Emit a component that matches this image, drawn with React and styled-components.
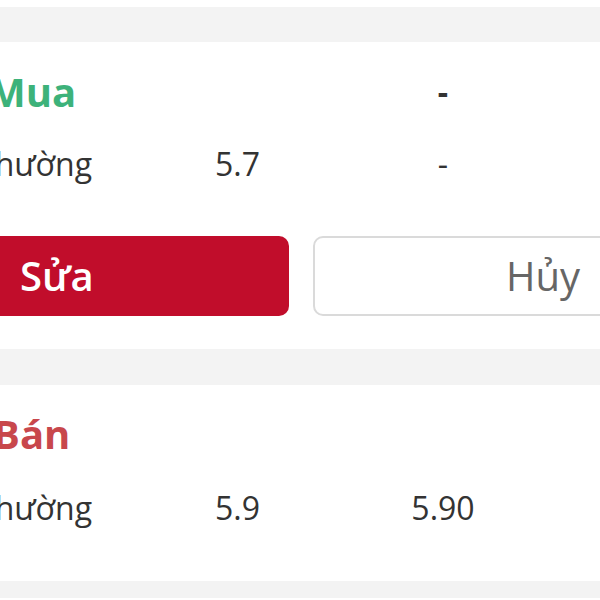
import React from 'react'
import styled, { createGlobalStyle } from 'styled-components'

const GlobalStyle = createGlobalStyle`
  html, body {
    margin: 0;
    padding: 0;
    background: #ffffff;
    overflow: hidden;
  }
  body {
    font-family: "Open Sans", "Noto Sans", sans-serif;
    color: #333333;
  }
`

const orders = [
  {
    id: 'buy',
    title: 'Mua',
    tone: 'buy',
    head: '-',
    label: 'Thường',
    price: '5.7',
    value: '-',
    actions: true,
  },
  {
    id: 'sell',
    title: 'Bán',
    tone: 'sell',
    head: '',
    label: 'Thường',
    price: '5.9',
    value: '5.90',
    actions: false,
  },
]

export default function App() {
  return (
    <Screen>
      <GlobalStyle />
      <TopGap />
      <Band $h={35} />
      {orders.map((o, i) => (
        <React.Fragment key={o.id}>
          <Card $top={o.actions ? 28 : 27} $bottom={o.actions ? 33 : 51}>
            <Row $size={40} $weight={700}>
              <Title $tone={o.tone}>{o.title}</Title>
              <Cell />
              <Cell $center $size={32}>{o.head}</Cell>
            </Row>
            <Row $size={32} $weight={400} $gap={o.actions ? 28 : 30}>
              <Cell>{o.label}</Cell>
              <Cell>{o.price}</Cell>
              <Cell $center>{o.value}</Cell>
            </Row>
            {o.actions && (
              <Actions>
                <EditButton>Sửa</EditButton>
                <CancelButton>Hủy</CancelButton>
              </Actions>
            )}
          </Card>
          <Band $h={i === 0 ? 36 : 17} />
        </React.Fragment>
      ))}
    </Screen>
  )
}

const Screen = styled.div`
  width: 600px;
  height: 600px;
  overflow: hidden;
  display: flex;
  flex-direction: column;
`

const TopGap = styled.div`
  height: 7px;
  flex: none;
  background: #ffffff;
`

const Band = styled.div`
  height: ${p => p.$h}px;
  flex: none;
  background: #f3f3f3;
`

const Card = styled.div`
  flex: none;
  background: #ffffff;
  padding: ${p => p.$top}px 0 ${p => p.$bottom}px;
  margin-left: -23px;
  width: 660px;
`

const Row = styled.div`
  display: grid;
  grid-template-columns: 238px 173px 110px;
  font-size: ${p => p.$size}px;
  font-weight: ${p => p.$weight};
  line-height: 44px;
  height: 44px;
  margin-top: ${p => p.$gap || 0}px;
  color: #333333;
  white-space: nowrap;
`

const Cell = styled.div`
  text-align: ${p => (p.$center ? 'center' : 'left')};
  ${p => p.$size && `font-size: ${p.$size}px;`}
`

const Title = styled.div`
  margin-left: ${p => (p.$tone === 'buy' ? 11 : 16)}px;
  color: ${p => (p.$tone === 'buy' ? '#3db27a' : '#c8474c')};
`

const Actions = styled.div`
  display: flex;
  gap: 24px;
  margin-top: 50px;
  margin-left: 3px;
  height: 80px;
`

const BaseButton = styled.div`
  box-sizing: border-box;
  height: 80px;
  border-radius: 10px;
  display: flex;
  align-items: center;
  font-size: 40px;
  line-height: 1;
`

const EditButton = styled(BaseButton)`
  width: 309px;
  padding-left: 40px;
  background: #c10d2b;
  color: #ffffff;
  font-weight: 600;
`

const CancelButton = styled(BaseButton)`
  width: 310px;
  border: 2px solid #dadada;
  background: #ffffff;
  color: #666666;
  font-weight: 500;
  justify-content: flex-end;
  padding-right: 41px;
`
